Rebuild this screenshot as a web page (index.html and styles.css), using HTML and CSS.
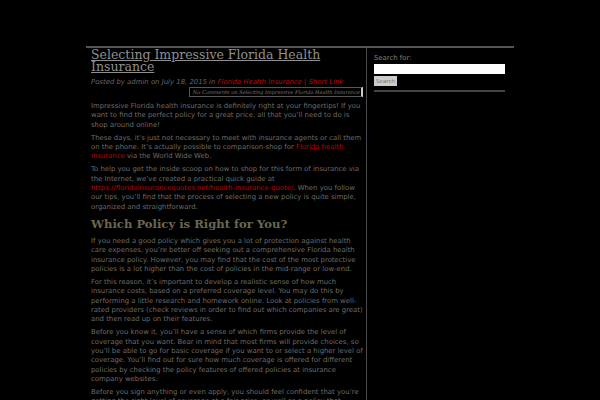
FILE: index.html
```html
<!DOCTYPE html>
<html>
<head>
<meta charset="utf-8">
<link rel="stylesheet" href="styles.css">
</head>
<body>
<div class="page">
  <div class="main">
    <h1 class="title"><a href="#">Selecting Impressive Florida Health Insurance</a></h1>
    <div class="meta">Posted by admin on July 18, 2015 in <span class="meta-links"><a href="#">Florida Health Insurance</a> | <a href="#">Short Link</a></span></div>
    <div class="comments-wrap"><div class="comments">No Comments on Selecting Impressive Florida Health Insurance</div></div>
    <div class="entry">
      <p>Impressive Florida health insurance is definitely right at your fingertips! If you want to find the perfect policy for a great price, all that you’ll need to do is shop around online!</p>
      <p>These days, it’s just not necessary to meet with insurance agents or call them on the phone. It’s actually possible to comparison-shop for <a href="#">Florida health insurance</a> via the World Wide Web.</p>
      <p>To help you get the inside scoop on how to shop for this form of insurance via the Internet, we’ve created a practical quick guide at <a href="#">https://floridainsurancequotes.net/health-insurance-quote/</a>. When you follow our tips, you’ll find that the process of selecting a new policy is quite simple, organized and straightforward.</p>
      <h2>Which Policy is Right for You?</h2>
      <p>If you need a good policy which gives you a lot of protection against health care expenses, you’re better off seeking out a comprehensive Florida health insurance policy. However, you may find that the cost of the most protective policies is a lot higher than the cost of policies in the mid-range or low-end.</p>
      <p>For this reason, it’s important to develop a realistic sense of how much insurance costs, based on a preferred coverage level. You may do this by performing a little research and homework online. Look at policies from well-rated providers (check reviews in order to find out which companies are great) and then read up on their features.</p>
      <p>Before you know it, you’ll have a sense of which firms provide the level of coverage that you want. Bear in mind that most firms will provide choices, so you’ll be able to go for basic coverage if you want to or select a higher level of coverage. You’ll find out for sure how much coverage is offered for different policies by checking the policy features of offered policies at insurance company websites.</p>
      <p>Before you sign anything or even apply, you should feel confident that you’re getting the right level of coverage at a fair price, as well as a policy that meets your needs.</p>
    </div>
  </div>
  <div class="sidebar">
    <div class="search">
      <label class="search-label">Search for:</label>
      <input class="search-input" type="text">
      <button class="search-btn">Search</button>
    </div>
  </div>
</div>
</body>
</html>
```
FILE: styles.css
```css
html, body {
  margin: 0;
  padding: 0;
  background: #000;
  height: 100%;
  overflow: hidden;
}
body {
  font-family: "DejaVu Sans", sans-serif;
  color: #6e6b68;
}
.page {
  width: 428px;
  margin-left: 86px;
  margin-top: 46px;
  border-top: 2px solid #555;
  display: flex;
  align-items: stretch;
  height: 400px;
}
.main {
  flex: 0 0 auto;
  width: 272px;
  padding-left: 5px;
  padding-right: 3px;
  border-right: 1.5px solid #4a4a4a;
}
.title {
  font-family: "DejaVu Serif", serif;
  font-weight: normal;
  font-size: 12.5px;
  line-height: 12.3px;
  margin: 1px 0 0 0;
}
.title a {
  color: #8f8f8f;
  text-decoration: underline;
}
.meta {
  font-size: 6.9px;
  font-style: italic;
  color: #666;
  margin-top: 4.6px;
  line-height: 9.3px;
}
.meta-links {
  color: #c00;
}
.meta a {
  color: #c00;
  text-decoration: none;
}
.comments-wrap {
  display: flex;
  justify-content: flex-end;
}
.comments {
  font-family: "DejaVu Serif", serif;
  font-style: italic;
  font-size: 5.1px;
  line-height: 8px;
  color: #777;
  border: 1px solid #555;
  border-right: 2px solid #ccc;
  padding: 0 1px 0 3px;
}
.entry {
  font-size: 6.9px;
  line-height: 9.33px;
  margin-top: 4.5px;
}
.entry p {
  margin: 0 0 3.7px 0;
}
.entry a {
  color: #b00;
  text-decoration: none;
}
.entry h2 {
  font-family: "DejaVu Serif", serif;
  font-weight: bold;
  font-size: 11.6px;
  color: #6b6650;
  margin: 5px 0 5px 0;
  line-height: 15px;
}
.sidebar {
  flex: 0 0 auto;
  padding-left: 7px;
  width: 131px;
  padding-top: 6px;
}
.search {
  border-bottom: 2px solid #444;
  padding-bottom: 4px;
}
.search-label {
  display: block;
  font-size: 6.9px;
  color: #808080;
  line-height: 9px;
  margin-bottom: 1px;
}
.search-input {
  display: block;
  box-sizing: border-box;
  width: 131px;
  height: 10px;
  border: 0;
  margin: 0 0 2px 0;
  padding: 0;
  background: #fff;
}
.search-btn {
  display: block;
  font-family: "DejaVu Sans", sans-serif;
  font-size: 5.5px;
  background: #ccc;
  color: #777;
  border: 0;
  padding: 0 2px;
  width: 23px;
  height: 10px;
  line-height: 10px;
}
```
